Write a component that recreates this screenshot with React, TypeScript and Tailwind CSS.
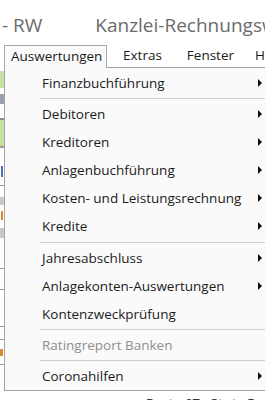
import React from "react";

type Item = { label: string; arrow?: boolean; disabled?: boolean } | { sep: number };

const items: Item[] = [
  { label: "Finanzbuchführung", arrow: true },
  { sep: 3 },
  { label: "Debitoren", arrow: true },
  { label: "Kreditoren", arrow: true },
  { label: "Anlagenbuchführung", arrow: true },
  { label: "Kosten- und Leistungsrechnung", arrow: true },
  { label: "Kredite", arrow: true },
  { sep: 4 },
  { label: "Jahresabschluss", arrow: true },
  { label: "Anlagekonten-Auswertungen", arrow: true },
  { label: "Kontenzweckprüfung" },
  { sep: 3 },
  { label: "Ratingreport Banken", disabled: true },
  { sep: 3 },
  { label: "Coronahilfen", arrow: true },
];

function Arrow() {
  return (
    <svg width="4" height="8" viewBox="0 0 4 8" className="shrink-0">
      <path d="M0 0 L4 4 L0 8 Z" fill="#111" />
    </svg>
  );
}

export default function App() {
  const font = { fontFamily: '"Open Sans", "Noto Sans", sans-serif' };
  return (
    <div
      className="w-[265px] h-[400px] overflow-hidden bg-white relative"
      style={font}
    >
      {/* title */}
      <div className="h-[45px] flex items-start pt-[13px] text-[19px] leading-[24px] text-[#6b6b6b] whitespace-nowrap">
        <span className="ml-[2px]">- RW</span>
        <span className="ml-[53px]">Kanzlei-Rechnungswesen</span>
      </div>
      {/* menu bar */}
      <div className="h-[22px] flex items-stretch whitespace-nowrap text-[13.5px] text-[#1b1b1b]">
        <div className="ml-[4px] w-[105px] border border-b-0 border-[#a8a8a8] bg-[#fafafa] relative z-10 h-[23px] pl-[6px] leading-[20px]">
          Auswertungen
        </div>
        <span className="ml-[16px] leading-[21px]">Extras</span>
        <span className="ml-[25px] leading-[21px]">Fenster</span>
        <span className="ml-[21px] leading-[21px]">H</span>
      </div>
      {/* body */}
      <div className="flex">
        <div className="w-[4px] flex flex-col shrink-0">
          <div className="h-[3px] bg-[#cfdcb8] mt-[4px]" />
          <div className="h-[14px] bg-[#c8e0a0]" />
          <div className="h-[10px] bg-[#9aa1ad] mt-[6px]" />
          <div className="h-[2px] bg-[#8a8a8a] mt-[14px]" />
          <div className="h-[26px] bg-[#c5e19a]" />
          <div className="h-[2px] bg-[#9a9a9a]" />
          <div className="h-[11px] bg-[#4d6fb5] mt-[18px] w-[2px] ml-[1px]" />
          <div className="h-[1px] bg-[#9a9a9a] mt-[8px]" />
          <div className="h-[8px] bg-[#c8c8c8] mt-[11px]" />
          <div className="h-[9px] bg-[#d98a2a] mt-[6px] w-[2px] ml-[1px]" />
          <div className="h-[10px] bg-[#c8c8c8] mt-[8px]" />
          <div className="h-[1px] bg-[#9a9a9a] mt-[30px]" />
          <div className="h-[1px] bg-[#9a9a9a] mt-[20px]" />
          <div className="h-[1px] bg-[#9a9a9a] mt-[36px]" />
          <div className="h-[1px] bg-[#9a9a9a] mt-[12px]" />
          <div className="h-[7px] bg-[#d98a2a] mt-[9px] w-[3px]" />
          <div className="h-[1px] bg-[#9a9a9a] mt-[8px]" />
        </div>
        <div className="w-[270px] shrink-0 border border-r-0 border-[#a3a3a3] bg-[#fafafa] pt-[1px] text-[13.5px] whitespace-nowrap">
          {items.map((it, i) =>
            "sep" in it ? (
              <div
                key={i}
                className={`flex flex-col justify-center pl-[35px] ${it.sep === 4 ? "h-[4px]" : "h-[3px]"}`}
              >
                <div className="h-px bg-[#cdcdcd]" />
              </div>
            ) : (
              <div key={i} className="h-[28px] flex items-center pl-[37px] pr-[12px]">
                <span
                  className={`flex-1 ${it.disabled ? "text-[#8e8e8e]" : "text-[#1b1b1b]"}`}
                >
                  {it.label}
                </span>
                {it.arrow ? <Arrow /> : null}
              </div>
            )
          )}
        </div>
      </div>
      <div className="ml-[146px] mt-[4px] text-[13px] leading-[16px] font-bold text-[#333] whitespace-nowrap">
        Proto 07 · Stat · Page
      </div>
    </div>
  );
}
